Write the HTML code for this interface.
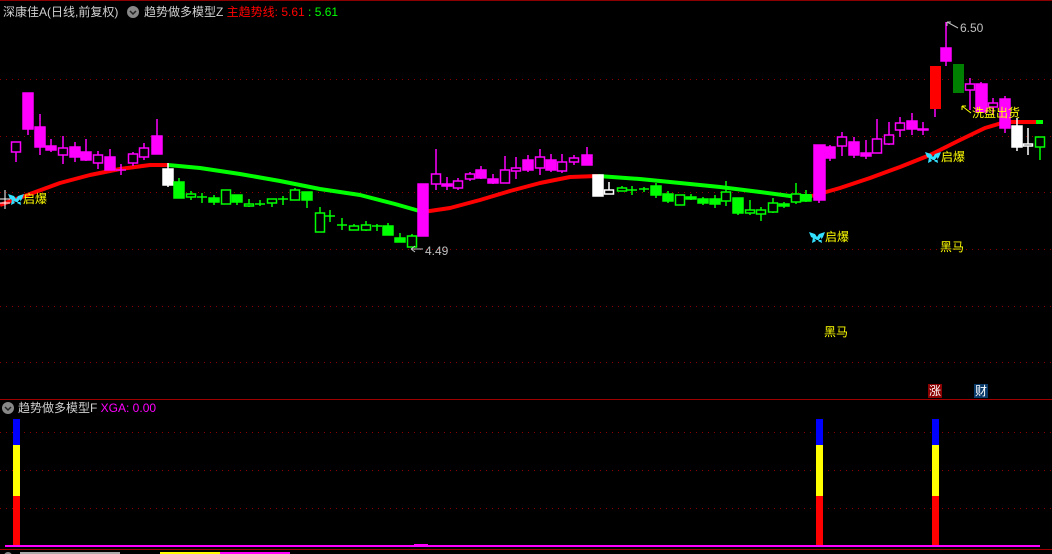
<!DOCTYPE html>
<html><head><meta charset="utf-8">
<style>
html,body{margin:0;padding:0;background:#000;}
body{width:1052px;height:554px;overflow:hidden;position:relative;font-family:"Liberation Sans","Noto Sans CJK SC",sans-serif;}
.t{position:absolute;white-space:nowrap;font-size:12px;line-height:14px;}
</style></head><body>
<svg width="1052" height="554" style="position:absolute;left:0;top:0" xmlns="http://www.w3.org/2000/svg">
<rect width="1052" height="554" fill="#000"/>
<line x1="0" y1="0.5" x2="1052" y2="0.5" stroke="#8b0000"/>
<line x1="0" y1="399.5" x2="1052" y2="399.5" stroke="#a00000"/>
<line x1="0" y1="549.5" x2="1052" y2="549.5" stroke="#a00000"/>
<g stroke="#900000" stroke-dasharray="1,5">
<line x1="0" y1="79.5" x2="1052" y2="79.5"/>
<line x1="0" y1="136.5" x2="1052" y2="136.5"/>
<line x1="0" y1="192.5" x2="1052" y2="192.5"/>
<line x1="0" y1="249.5" x2="1052" y2="249.5"/>
<line x1="0" y1="306.5" x2="1052" y2="306.5"/>
<line x1="0" y1="362.5" x2="1052" y2="362.5"/>
<line x1="0" y1="432.5" x2="1052" y2="432.5"/>
<line x1="0" y1="470.5" x2="1052" y2="470.5"/>
<line x1="0" y1="508.5" x2="1052" y2="508.5"/>
</g>
<g fill="none" stroke-width="4" stroke-linejoin="round">
<polyline stroke="#ff0000" points="0,205 30,194 60,183 90,175 120,169 150,165 168,165"/>
<polyline stroke="#00ff00" points="168,165 200,168 240,174 280,181 320,189 360,195 395,204 423,212"/>
<polyline stroke="#ff0000" points="423,212 450,208 480,200 510,191 540,183 570,177 598,176"/>
<polyline stroke="#00ff00" points="598,176 640,179 680,183 720,187 760,192 790,196 812,196"/>
<polyline stroke="#ff0000" points="812,196 840,188 870,178 900,167 930,155 960,140 985,128 1005,122 1040,122"/>
<polyline stroke="#00ff00" points="1036,122 1043,122"/>
</g>
<g stroke-width="1.5">
<g stroke="#ff00ff">
<line x1="16" y1="142" x2="16" y2="162"/><rect x="11.5" y="142" width="9" height="10" fill="#000"/>
<line x1="28" y1="93" x2="28" y2="135"/><rect x="23" y="93" width="10" height="36" fill="#ff00ff"/>
<line x1="40" y1="114" x2="40" y2="155"/><rect x="35" y="127" width="10" height="20" fill="#ff00ff"/>
<line x1="51" y1="139" x2="51" y2="152"/><rect x="46" y="146" width="10" height="4" fill="#ff00ff"/>
<line x1="63" y1="136" x2="63" y2="164"/><rect x="58.5" y="148" width="9" height="7" fill="#000"/>
<line x1="75" y1="142" x2="75" y2="162"/><rect x="70" y="147" width="10" height="10" fill="#ff00ff"/>
<line x1="86" y1="139" x2="86" y2="161"/><rect x="81" y="152" width="10" height="8" fill="#ff00ff"/>
<line x1="98" y1="151" x2="98" y2="169"/><rect x="93.5" y="155" width="9" height="8" fill="#000"/>
<line x1="110" y1="149" x2="110" y2="170"/><rect x="105" y="157" width="10" height="13" fill="#ff00ff"/>
<line x1="121" y1="164" x2="121" y2="175"/><line x1="116" y1="170" x2="126" y2="170"/>
<line x1="133" y1="152" x2="133" y2="166"/><rect x="128.5" y="154" width="9" height="9" fill="#000"/>
<line x1="144" y1="143" x2="144" y2="160"/><rect x="139.5" y="148" width="9" height="9" fill="#000"/>
<line x1="157" y1="119" x2="157" y2="154"/><rect x="152" y="136" width="10" height="18" fill="#ff00ff"/>
</g>
<g stroke="#ffffff"><line x1="168" y1="163" x2="168" y2="187"/><rect x="163" y="169" width="10" height="16" fill="#fff"/></g>
<g stroke="#00ff00">
<line x1="179" y1="178" x2="179" y2="198"/><rect x="174" y="182" width="10" height="16" fill="#00ff00"/>
<line x1="191" y1="191" x2="191" y2="200"/><rect x="186.5" y="194" width="9" height="3" fill="#000"/>
<line x1="202" y1="193" x2="202" y2="203"/><line x1="197" y1="197" x2="207" y2="197"/>
<line x1="214" y1="195" x2="214" y2="205"/><rect x="209" y="198" width="10" height="4" fill="#00ff00"/>
<rect x="221.5" y="190" width="9" height="14" fill="#000"/>
<line x1="237" y1="195" x2="237" y2="205"/><rect x="232" y="195" width="10" height="7" fill="#00ff00"/>
<line x1="249" y1="199" x2="249" y2="207"/><rect x="244.5" y="204" width="9" height="2" fill="#000"/>
<line x1="260" y1="200" x2="260" y2="206"/><line x1="255" y1="204" x2="265" y2="204"/>
<line x1="272" y1="199" x2="272" y2="207"/><rect x="267.5" y="199" width="9" height="4" fill="#000"/>
<line x1="283" y1="196" x2="283" y2="205"/><line x1="278" y1="199" x2="288" y2="199"/>
<line x1="295" y1="188" x2="295" y2="200"/><rect x="290.5" y="190" width="9" height="10" fill="#000"/>
<line x1="307" y1="192" x2="307" y2="208"/><rect x="302" y="192" width="10" height="8" fill="#00ff00"/>
<line x1="320" y1="207" x2="320" y2="232"/><rect x="315.5" y="213" width="9" height="19" fill="#000"/>
<line x1="330" y1="210" x2="330" y2="222"/><line x1="325" y1="216" x2="335" y2="216"/>
<line x1="342" y1="218" x2="342" y2="230"/><line x1="337" y1="225" x2="347" y2="225"/>
<line x1="354" y1="224" x2="354" y2="230"/><rect x="349.5" y="226" width="9" height="4" fill="#000"/>
<line x1="366" y1="221" x2="366" y2="231"/><rect x="361.5" y="225" width="9" height="5" fill="#000"/>
<line x1="377" y1="224" x2="377" y2="231"/><line x1="372" y1="226" x2="382" y2="226"/>
<line x1="388" y1="223" x2="388" y2="235"/><rect x="383" y="226" width="10" height="9" fill="#00ff00"/>
<line x1="400" y1="233" x2="400" y2="242"/><rect x="395" y="238" width="10" height="4" fill="#00ff00"/>
<line x1="412" y1="234" x2="412" y2="247"/><rect x="407.5" y="236" width="9" height="11" fill="#000"/>
</g>
<g stroke="#ff00ff">
<rect x="418" y="184" width="10" height="52" fill="#ff00ff"/>
<line x1="436" y1="149" x2="436" y2="190"/><rect x="431.5" y="174" width="9" height="10" fill="#000"/>
<line x1="447" y1="177" x2="447" y2="190"/><rect x="442" y="184" width="10" height="2" fill="#ff00ff"/>
<line x1="458" y1="178" x2="458" y2="190"/><rect x="453.5" y="181" width="9" height="7" fill="#000"/>
<line x1="470" y1="172" x2="470" y2="181"/><rect x="465.5" y="174" width="9" height="5" fill="#000"/>
<line x1="481" y1="166" x2="481" y2="179"/><rect x="476" y="170" width="10" height="8" fill="#ff00ff"/>
<line x1="493" y1="174" x2="493" y2="184"/><rect x="488" y="179" width="10" height="4" fill="#ff00ff"/>
<line x1="505" y1="156" x2="505" y2="183"/><rect x="500.5" y="170" width="9" height="13" fill="#000"/>
<line x1="516" y1="157" x2="516" y2="179"/><rect x="511.5" y="168" width="9" height="3" fill="#000"/>
<line x1="528" y1="155" x2="528" y2="172"/><rect x="523" y="160" width="10" height="10" fill="#ff00ff"/>
<line x1="540" y1="149" x2="540" y2="175"/><rect x="535.5" y="157" width="9" height="11" fill="#000"/>
<line x1="551" y1="154" x2="551" y2="172"/><rect x="546" y="160" width="10" height="10" fill="#ff00ff"/>
<line x1="562" y1="154" x2="562" y2="173"/><rect x="557.5" y="162" width="9" height="9" fill="#000"/>
<line x1="574" y1="155" x2="574" y2="165"/><rect x="569.5" y="158" width="9" height="4" fill="#000"/>
<line x1="587" y1="147" x2="587" y2="165"/><rect x="582" y="155" width="10" height="10" fill="#ff00ff"/>
</g>
<g stroke="#ffffff">
<rect x="593" y="175" width="10" height="21" fill="#fff"/>
<line x1="609" y1="182" x2="609" y2="194"/><rect x="604.5" y="190" width="9" height="4" fill="#000"/>
</g>
<g stroke="#00ff00">
<line x1="622" y1="186" x2="622" y2="191"/><rect x="617.5" y="188" width="9" height="3" fill="#000"/>
<line x1="632" y1="186" x2="632" y2="195"/><line x1="627" y1="190" x2="637" y2="190"/>
<line x1="644" y1="187" x2="644" y2="192"/><line x1="639" y1="189" x2="649" y2="189"/>
<line x1="656" y1="183" x2="656" y2="198"/><rect x="651" y="186" width="10" height="9" fill="#00ff00"/>
<line x1="668" y1="191" x2="668" y2="203"/><rect x="663" y="194" width="10" height="7" fill="#00ff00"/>
<rect x="675.5" y="195" width="9" height="10" fill="#000"/>
<line x1="691" y1="194" x2="691" y2="200"/><rect x="686" y="197" width="10" height="2" fill="#00ff00"/>
<line x1="703" y1="197" x2="703" y2="205"/><rect x="698" y="199" width="10" height="4" fill="#00ff00"/>
<line x1="715" y1="195" x2="715" y2="208"/><rect x="710" y="199" width="10" height="5" fill="#00ff00"/>
<line x1="726" y1="181" x2="726" y2="206"/><rect x="721.5" y="192" width="9" height="9" fill="#000"/>
<line x1="738" y1="198" x2="738" y2="215"/><rect x="733" y="198" width="10" height="15" fill="#00ff00"/>
<line x1="750" y1="200" x2="750" y2="215"/><rect x="745.5" y="210" width="9" height="3" fill="#000"/>
<line x1="761" y1="207" x2="761" y2="221"/><rect x="756.5" y="210" width="9" height="4" fill="#000"/>
<line x1="773" y1="198" x2="773" y2="213"/><rect x="768.5" y="203" width="9" height="9" fill="#000"/>
<line x1="784" y1="202" x2="784" y2="208"/><rect x="779" y="204" width="10" height="2" fill="#00ff00"/>
<line x1="796" y1="183" x2="796" y2="204"/><rect x="791.5" y="194" width="9" height="8" fill="#000"/>
<line x1="806" y1="190" x2="806" y2="202"/><rect x="801" y="196" width="10" height="5" fill="#00ff00"/>
</g>
<g stroke="#ff00ff">
<line x1="819" y1="145" x2="819" y2="203"/><rect x="814" y="145" width="11" height="55" fill="#ff00ff"/>
<line x1="830" y1="145" x2="830" y2="161"/><rect x="825" y="147" width="10" height="11" fill="#ff00ff"/>
<line x1="842" y1="132" x2="842" y2="156"/><rect x="837.5" y="137" width="9" height="9" fill="#000"/>
<line x1="854" y1="137" x2="854" y2="158"/><rect x="849" y="142" width="10" height="13" fill="#ff00ff"/>
<line x1="866" y1="140" x2="866" y2="159"/><rect x="861" y="153" width="10" height="3" fill="#ff00ff"/>
<line x1="877" y1="119" x2="877" y2="153"/><rect x="872.5" y="139" width="9" height="14" fill="#000"/>
<line x1="889" y1="122" x2="889" y2="145"/><rect x="884.5" y="135" width="9" height="9" fill="#000"/>
<line x1="900" y1="117" x2="900" y2="137"/><rect x="895.5" y="123" width="9" height="7" fill="#000"/>
<line x1="912" y1="113" x2="912" y2="135"/><rect x="907" y="121" width="10" height="8" fill="#ff00ff"/>
<line x1="923" y1="122" x2="923" y2="135"/><rect x="918" y="129" width="10" height="1" fill="#ff00ff"/>
</g>
<line x1="935" y1="108" x2="935" y2="117" stroke="#ff00ff"/>
<rect x="930" y="66" width="11" height="43" fill="#ff0000"/>
<g stroke="#ff00ff">
<line x1="946" y1="22" x2="946" y2="66"/><rect x="941" y="48" width="10" height="13" fill="#ff00ff"/>
</g>
<rect x="953" y="64" width="11" height="29" fill="#008000"/>
<g stroke="#ff00ff">
<line x1="970" y1="78" x2="970" y2="110"/><rect x="965.5" y="84" width="9" height="6" fill="#000"/>
<line x1="981" y1="82" x2="981" y2="112"/><rect x="976" y="84" width="11" height="28" fill="#ff00ff"/>
<line x1="993" y1="98" x2="993" y2="115"/><rect x="988.5" y="103" width="9" height="4" fill="#000"/>
<line x1="1005" y1="96" x2="1005" y2="133"/><rect x="1000" y="99" width="10" height="29" fill="#ff00ff"/>
</g>
<g stroke="#ffffff">
<line x1="1017" y1="118" x2="1017" y2="151"/><rect x="1012" y="126" width="10" height="21" fill="#fff"/>
<line x1="1028" y1="128" x2="1028" y2="155"/><rect x="1023.5" y="144" width="9" height="2" fill="#000"/>
</g>
<g stroke="#00ff00"><line x1="1040" y1="147" x2="1040" y2="160"/><rect x="1035.5" y="137" width="9" height="10" fill="#000"/></g>
</g>
<g stroke="#fff" stroke-width="1"><line x1="5" y1="190" x2="5" y2="209"/><line x1="0" y1="199" x2="10" y2="199"/><line x1="0" y1="203" x2="10" y2="203"/></g>
<g stroke="#c0c0c0" fill="none" stroke-width="1">
<path d="M411,249 L423,249 M411,249 l4,-3 M411,249 l4,3"/>
<path d="M947,22 L958,28 M947,22 l0,4 M947,22 l4,0"/>
</g>
<path d="M971,113 L962,106 M962,106 l4,0 M962,106 l0,4" stroke="#ffff00" fill="none"/>
<g fill="#33e0ff">
<path d="M10,199 l-2,-5 6,2 2,3 2,-3 6,-2 -2,5 -2,3 -4,0 z M12,199 l3,4 -4,2 z M20,199 l-3,4 4,2 z"/>
<path d="M811,237 l-2,-5 6,2 2,3 2,-3 6,-2 -2,5 -2,3 -4,0 z M813,237 l3,4 -4,2 z M821,237 l-3,4 4,2 z"/>
<path d="M927,157 l-2,-5 6,2 2,3 2,-3 6,-2 -2,5 -2,3 -4,0 z M929,157 l3,4 -4,2 z M937,157 l-3,4 4,2 z"/>
</g>
<g>
<rect x="13" y="419" width="7" height="26" fill="#0000ff"/><rect x="13" y="445" width="7" height="51" fill="#ffff00"/><rect x="13" y="496" width="7" height="51" fill="#ff0000"/>
<rect x="816" y="419" width="7" height="26" fill="#0000ff"/><rect x="816" y="445" width="7" height="51" fill="#ffff00"/><rect x="816" y="496" width="7" height="51" fill="#ff0000"/>
<rect x="932" y="419" width="7" height="26" fill="#0000ff"/><rect x="932" y="445" width="7" height="51" fill="#ffff00"/><rect x="932" y="496" width="7" height="51" fill="#ff0000"/>
<rect x="5" y="545" width="1035" height="2" fill="#ff00ff"/>
<rect x="414" y="544" width="14" height="2" fill="#ff00ff"/>
</g>
<g>
<circle cx="8" cy="556" r="4" fill="#888"/>
<rect x="20" y="552" width="100" height="2" fill="#aaa"/>
<rect x="160" y="552" width="70" height="2" fill="#ffff00"/>
<rect x="220" y="552" width="70" height="2" fill="#ff00ff"/>
</g>
<circle cx="133" cy="12" r="6" fill="#888"/><path d="M130,11 l3,3 3,-3" stroke="#222" fill="none" stroke-width="1.5"/>
<circle cx="8" cy="408" r="6" fill="#888"/><path d="M5,407 l3,3 3,-3" stroke="#222" fill="none" stroke-width="1.5"/>
<rect x="928" y="384" width="14" height="14" fill="#8b0000"/>
<rect x="974" y="384" width="14" height="14" fill="#0a3a6a"/>
</svg>
<div class="t" style="left:3px;top:5px;color:#d0d0d0;font-size:12px">深康佳A(日线,前复权)</div>
<div class="t" style="left:144px;top:5px;color:#d0d0d0;font-size:12px">趋势做多模型Z <span style="color:#ff0000">主趋势线: 5.61</span> <span style="color:#00ff00">: 5.61</span></div>
<div class="t" style="left:18px;top:401px;color:#d0d0d0;font-size:12px">趋势做多模型F <span style="color:#ff00ff;font-size:12px">XGA: 0.00</span></div>
<div class="t" style="left:23px;top:192px;color:#ffff00">启爆</div>
<div class="t" style="left:825px;top:230px;color:#ffff00">启爆</div>
<div class="t" style="left:941px;top:150px;color:#ffff00">启爆</div>
<div class="t" style="left:940px;top:240px;color:#ffff00">黑马</div>
<div class="t" style="left:824px;top:325px;color:#ffff00">黑马</div>
<div class="t" style="left:972px;top:106px;color:#ffff00">洗盘出货</div>
<div class="t" style="left:425px;top:244px;color:#c0c0c0">4.49</div>
<div class="t" style="left:960px;top:21px;color:#c0c0c0">6.50</div>
<div class="t" style="left:929px;top:384px;color:#fff;font-size:12px">涨</div>
<div class="t" style="left:975px;top:384px;color:#fff;font-size:12px">财</div>
</body></html>
